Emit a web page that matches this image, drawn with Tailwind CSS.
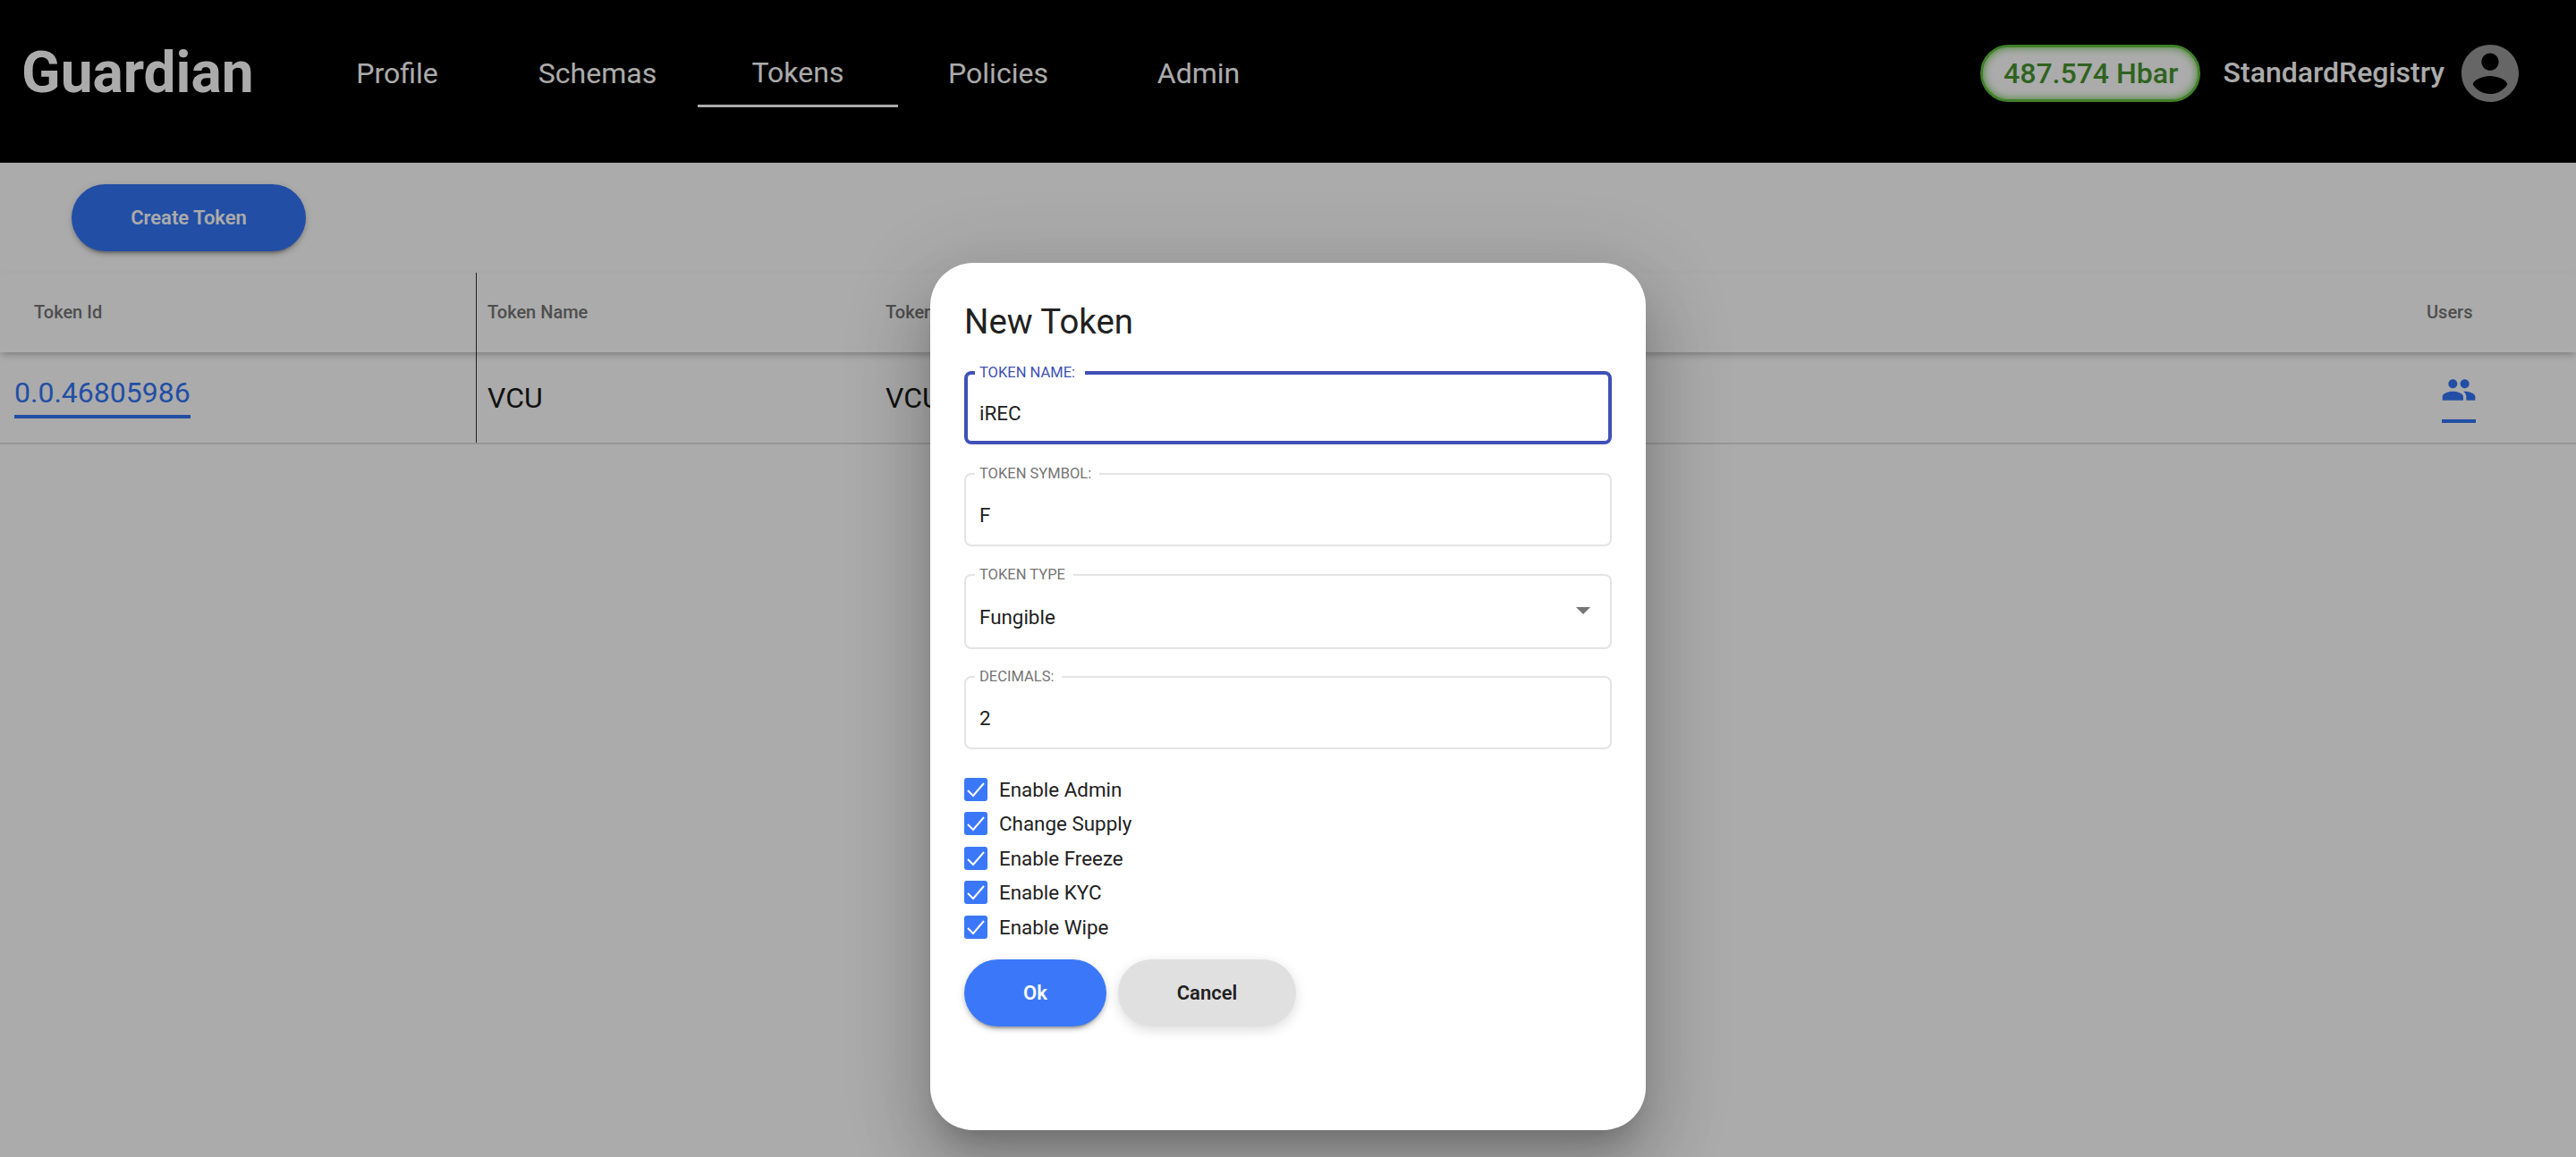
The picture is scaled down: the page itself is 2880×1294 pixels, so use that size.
<!DOCTYPE html>
<html lang="en">
<head>
    <meta charset="UTF-8">
    <title>Guardian</title>
    <script src="https://cdn.jsdelivr.net/npm/@tailwindcss/browser@4"></script>
</head>
<body class="bg-white font-['Roboto',sans-serif] overflow-hidden">
    <div class="relative h-[1294px] w-[2880px] overflow-hidden">
        <!-- page -->
        <header class="h-[182px] bg-black flex items-center pb-[18px] pl-[24px] pr-[64px] text-white">
            <div class="w-[308px] text-[64px] leading-none font-bold">Guardian</div>
            <nav class="flex text-[32px] h-[76px]">
                <a class="w-[224px] flex items-center justify-center">Profile</a>
                <a class="w-[224px] flex items-center justify-center">Schemas</a>
                <a class="w-[224px] flex items-center justify-center border-b-[3px] border-white">Tokens</a>
                <a class="w-[224px] flex items-center justify-center">Policies</a>
                <a class="w-[224px] flex items-center justify-center">Admin</a>
            </nav>
            <div class="ml-auto flex items-center">
                <div class="w-[246px] h-[64px] rounded-full border-[3px] border-[#62c03f] bg-white shadow-[inset_0_0_10px_#62c03f] flex items-center justify-center pl-[2px] text-[32px] font-medium text-[#469430]">487.574 Hbar</div>
                <div class="ml-[26px] -mt-[2px] text-[32px] font-medium">StandardRegistry</div>
                <svg class="ml-[19px] w-[64px] h-[64px] fill-[#989898]" viewBox="2 2 20 20"><path d="M12 2C6.48 2 2 6.48 2 12s4.48 10 10 10 10-4.48 10-10S17.52 2 12 2zm0 3c1.66 0 3 1.34 3 3s-1.34 3-3 3-3-1.34-3-3 1.34-3 3-3zm0 14.2c-2.5 0-4.71-1.28-6-3.22.03-1.99 4-3.08 6-3.08 1.99 0 5.97 1.09 6 3.08-1.29 1.94-3.5 3.22-6 3.22z"/></svg>
            </div>
        </header>

        <main>
            <div class="pt-[24px] pl-[80px]">
                <button class="w-[262px] h-[75px] rounded-full bg-[#3476f6] text-white text-[22px] font-semibold shadow-[0_6px_2px_-4px_rgba(0,0,0,.2),0_4px_4px_0_rgba(0,0,0,.14),0_2px_10px_0_rgba(0,0,0,.12)]">Create Token</button>
            </div>
            <div class="mt-[24px]">
                <div class="flex h-[89px] items-center pb-[2px] text-[20px] text-[#757575] font-medium shadow-[0_4px_8px_-2px_rgba(0,0,0,.3)] relative">
                    <div class="w-[533px] h-[89px] -mb-[2px] flex items-center pb-[2px] pl-[38px] border-r border-black/80">Token Id</div>
                    <div class="w-[444px] pl-[12px]">Token Name</div>
                    <div class="pl-[13px]">Token Symbol</div>
                    <div class="ml-auto w-[167px]">Users</div>
                </div>
                <div class="flex h-[103px] items-center text-[32px] text-[#1a1a1a] border-b-2 border-[#e0e0e0]">
                    <div class="w-[533px] h-full flex items-center pl-[16px] border-r border-black/80">
                        <a class="text-[#3476f6] border-b-4 border-[#3476f6] leading-[49px] mb-[6px]">0.0.46805986</a>
                    </div>
                    <div class="w-[444px] pl-[12px]">VCU</div>
                    <div class="pl-[13px]">VCU</div>
                    <div class="ml-auto w-[150px]">
                        <div class="w-[38px] h-[57px] border-b-4 border-[#3476f6]">
                            <svg class="w-[40px] h-[40px] -ml-[1px] fill-[#3476f6]" viewBox="0 0 24 24"><path d="M16 11c1.66 0 2.99-1.34 2.99-3S17.66 5 16 5c-1.66 0-3 1.34-3 3s1.34 3 3 3zm-8 0c1.66 0 2.99-1.34 2.99-3S9.66 5 8 5C6.34 5 5 6.34 5 8s1.34 3 3 3zm0 2c-2.33 0-7 1.17-7 3.5V19h14v-2.5c0-2.33-4.67-3.5-7-3.5zm8 0c-.29 0-.62.02-.97.05 1.16.84 1.97 1.97 1.97 3.45V19h6v-2.5c0-2.33-4.67-3.5-7-3.5z"/></svg>
                        </div>
                    </div>
                </div>
            </div>
        </main>

        <!-- dialog backdrop -->
        <div class="absolute inset-0 bg-black/33 flex justify-center items-start pt-[294px]">
            <div class="w-[800px] h-[970px] rounded-[48px] bg-white px-[38px] pt-[40px] text-[#212121] shadow-[0_22px_30px_-14px_rgba(0,0,0,.2),0_48px_76px_6px_rgba(0,0,0,.14),0_18px_92px_16px_rgba(0,0,0,.12)]">
                <h2 class="text-[38.4px] leading-[48px] pt-[2px] -mb-[2px]">New Token</h2>

                <fieldset class="mt-[33px] h-[82px] rounded-lg border-4 border-[#3f51b5] px-[8px]">
                    <legend class="pl-[5px] pr-[11px] text-[16.5px] leading-[4px] text-[#3f51b5] uppercase">Token Name:</legend>
                    <div class="text-[22.4px] leading-[26px] pt-[30px] pl-[5px]">iREC</div>
                </fieldset>

                <fieldset class="mt-[32px] h-[82px] rounded-lg border-2 border-[#e4e4e4] px-[10px]">
                    <legend class="pl-[5px] pr-[9px] text-[16.5px] leading-[2px] text-[#757575] uppercase">Token Symbol:</legend>
                    <div class="text-[22.4px] leading-[26px] pt-[32px] pl-[5px]">F</div>
                </fieldset>

                <fieldset class="mt-[31px] h-[84px] rounded-lg border-2 border-[#e4e4e4] px-[10px]">
                    <legend class="pl-[5px] pr-[9px] text-[16.5px] leading-[2px] text-[#757575] uppercase">Token Type</legend>
                    <div class="flex items-center justify-between text-[22.4px] leading-[26px] pt-[33px] pl-[5px]">
                        <span>Fungible</span>
                        <span class="mr-[12px] -mt-[14px] w-0 h-0 border-x-[8px] border-x-transparent border-t-[8px] border-t-[#757575]"></span>
                    </div>
                </fieldset>

                <fieldset class="mt-[30px] h-[82px] rounded-lg border-2 border-[#e4e4e4] px-[10px]">
                    <legend class="pl-[5px] pr-[9px] text-[16.5px] leading-[2px] text-[#757575] uppercase">Decimals:</legend>
                    <div class="text-[22.4px] leading-[26px] pt-[32px] pl-[5px]">2</div>
                </fieldset>

                <div class="mt-[32px] flex flex-col gap-[12.4px] text-[22.4px] leading-[26px]">
                    <label class="flex items-center gap-[13px]">
                        <span class="w-[26px] h-[26px] rounded-[3px] bg-[#3a78f9] flex items-center justify-center"><svg class="w-[24px] h-[24px]" viewBox="0 0 24 24" fill="none" stroke="white" stroke-width="2"><path d="M3 13l6 6L21 5"/></svg></span>Enable Admin
                    </label>
                    <label class="flex items-center gap-[13px]">
                        <span class="w-[26px] h-[26px] rounded-[3px] bg-[#3a78f9] flex items-center justify-center"><svg class="w-[24px] h-[24px]" viewBox="0 0 24 24" fill="none" stroke="white" stroke-width="2"><path d="M3 13l6 6L21 5"/></svg></span>Change Supply
                    </label>
                    <label class="flex items-center gap-[13px]">
                        <span class="w-[26px] h-[26px] rounded-[3px] bg-[#3a78f9] flex items-center justify-center"><svg class="w-[24px] h-[24px]" viewBox="0 0 24 24" fill="none" stroke="white" stroke-width="2"><path d="M3 13l6 6L21 5"/></svg></span>Enable Freeze
                    </label>
                    <label class="flex items-center gap-[13px]">
                        <span class="w-[26px] h-[26px] rounded-[3px] bg-[#3a78f9] flex items-center justify-center"><svg class="w-[24px] h-[24px]" viewBox="0 0 24 24" fill="none" stroke="white" stroke-width="2"><path d="M3 13l6 6L21 5"/></svg></span>Enable KYC
                    </label>
                    <label class="flex items-center gap-[13px]">
                        <span class="w-[26px] h-[26px] rounded-[3px] bg-[#3a78f9] flex items-center justify-center"><svg class="w-[24px] h-[24px]" viewBox="0 0 24 24" fill="none" stroke="white" stroke-width="2"><path d="M3 13l6 6L21 5"/></svg></span>Enable Wipe
                    </label>
                </div>

                <div class="mt-[23px] flex gap-[13px] text-[22px] font-semibold">
                    <button class="w-[159px] h-[75px] rounded-full bg-[#3a78f9] text-white shadow-[0_6px_2px_-4px_rgba(0,0,0,.2),0_4px_4px_0_rgba(0,0,0,.14),0_2px_10px_0_rgba(0,0,0,.12)]">Ok</button>
                    <button class="w-[199px] h-[75px] rounded-full bg-[#e0e0e0] text-[#212121] shadow-[0_4px_14px_rgba(0,0,0,.14)]">Cancel</button>
                </div>
            </div>
        </div>
    </div>
</body>
</html>
